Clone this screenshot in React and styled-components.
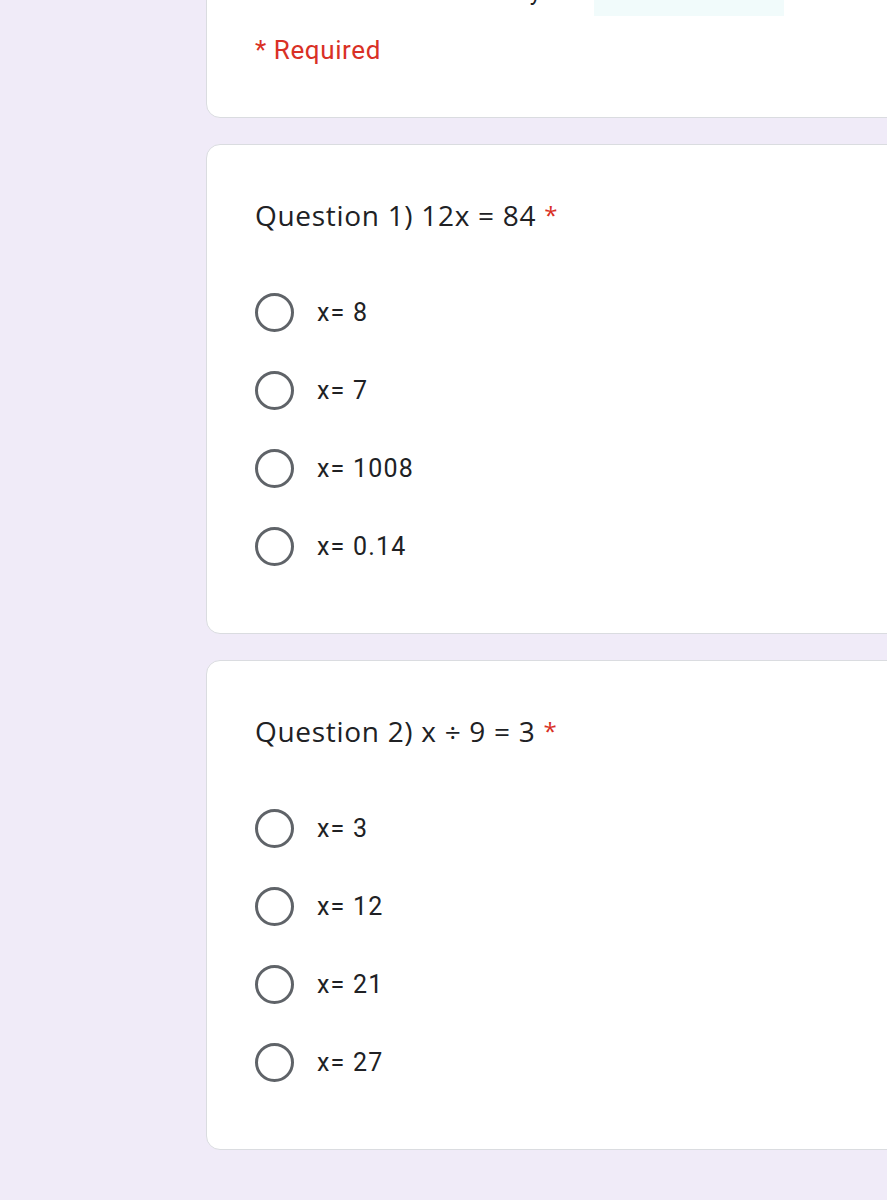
import styled, { createGlobalStyle } from "styled-components";

const GlobalStyle = createGlobalStyle`
  html, body {
    margin: 0;
    padding: 0;
    background: #f0ebf8;
    overflow-x: hidden;
  }
  body {
    font-family: Roboto, "Liberation Sans", sans-serif;
  }
`

const Page = styled.main`
  display: flex;
  flex-direction: column;
  gap: 26px;
  padding-left: 206px;
  padding-bottom: 60px;
  width: 740px;
`

const Card = styled.section`
  background: #ffffff;
  border: 1.5px solid #dadce0;
  border-radius: 14px;
  padding: 52px 48px 48px 48px;
  box-sizing: border-box;
  width: 100%;
`

const HeadCard = styled(Card)`
  margin-top: -75px;
  padding-top: 42px;
  padding-bottom: 51px;
`

const EmailRow = styled.div`
  display: flex;
  align-items: flex-end;
  height: 48px;
  margin-bottom: 18px;
`

const EmailLabel = styled.span`
  width: 286px;
  text-align: right;
  font-size: 24px;
  color: #202124;
  line-height: 48px;
`

const EmailField = styled.div`
  margin-left: 53px;
  width: 190px;
  height: 32px;
  background: #f1fbfb;
`

const Required = styled.p`
  margin: 0;
  color: #d93025;
  font-size: 26px;
  letter-spacing: 0.6px;
  line-height: 32px;
`

const Title = styled.h2`
  margin: 0 0 40px 0;
  font-family: "Open Sans", Roboto, sans-serif;
  font-weight: 400;
  font-size: 28px;
  line-height: 36px;
  color: #202124;
  letter-spacing: 0.7px;
`

const Star = styled.span`
  color: #d93025;
  font-size: 24px;
  margin-left: 8px;
  vertical-align: 2px;
`

const Options = styled.div`
  display: flex;
  flex-direction: column;
`

const Option = styled.label`
  display: flex;
  align-items: center;
  height: 78px;
  gap: 23px;
  font-size: 25px;
  letter-spacing: 1.2px;
  color: #202124;
`

const Radio = styled.span`
  width: 39px;
  height: 39px;
  border: 3.5px solid #5f6368;
  border-radius: 50%;
  box-sizing: border-box;
  flex-shrink: 0;
`

const questions = [
  { title: "Question 1) 12x = 84", options: ["x= 8", "x= 7", "x= 1008", "x= 0.14"] },
  { title: "Question 2) x ÷ 9 = 3", options: ["x= 3", "x= 12", "x= 21", "x= 27"] },
];

export default function App() {
  return (
    <>
      <GlobalStyle />
      <Page>
        <HeadCard>
          <EmailRow>
            <EmailLabel>Answered by</EmailLabel>
            <EmailField />
          </EmailRow>
          <Required>* Required</Required>
        </HeadCard>
        {questions.map((q, i) => (
          <Card key={i}>
            <Title>
              {q.title}
              <Star>*</Star>
            </Title>
            <Options>
              {q.options.map((opt) => (
                <Option key={opt}>
                  <Radio />
                  {opt}
                </Option>
              ))}
            </Options>
          </Card>
        ))}
      </Page>
    </>
  )
}
